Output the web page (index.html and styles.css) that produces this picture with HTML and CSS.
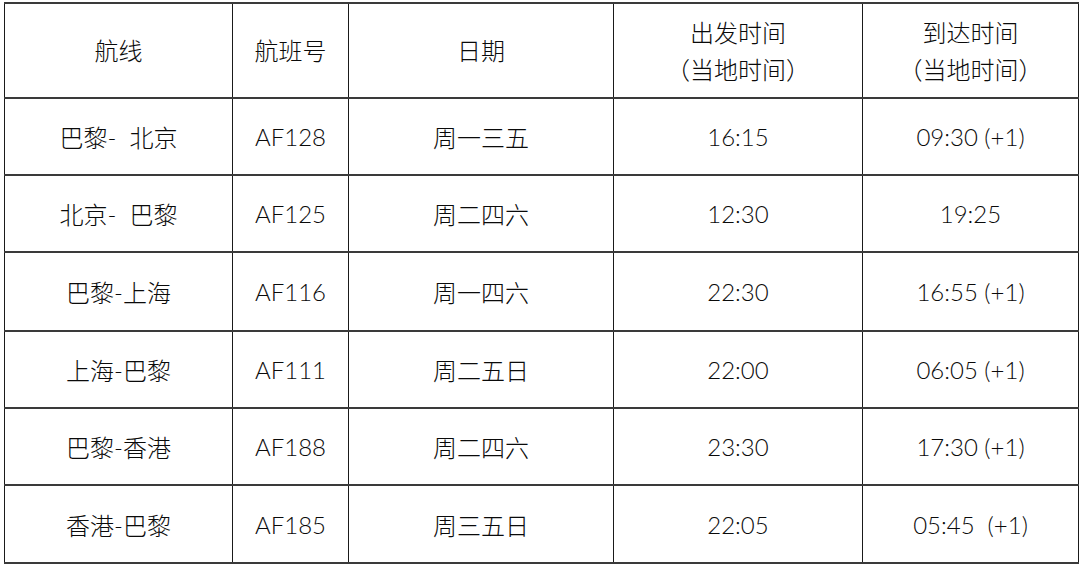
FILE: index.html
```html
<!DOCTYPE html>
<html lang="zh-CN">
<head>
<meta charset="utf-8">
<title>航班时刻表</title>
<link rel="stylesheet" href="styles.css">
</head>
<body>
<table class="schedule">
  <colgroup>
    <col class="c-route">
    <col class="c-flight">
    <col class="c-days">
    <col class="c-dep">
    <col class="c-arr">
  </colgroup>
  <thead>
    <tr class="head-row">
      <th>航线</th>
      <th>航班号</th>
      <th>日期</th>
      <th>出发时间<br>（当地时间）</th>
      <th>到达时间<br>（当地时间）</th>
    </tr>
  </thead>
  <tbody>
    <tr class="r1"><td>巴黎-&nbsp; 北京</td><td>AF128</td><td>周一三五</td><td>16:15</td><td>09:30 (+1)</td></tr>
    <tr class="r2"><td>北京-&nbsp; 巴黎</td><td>AF125</td><td>周二四六</td><td>12:30</td><td>19:25</td></tr>
    <tr class="r3"><td>巴黎-上海</td><td>AF116</td><td>周一四六</td><td>22:30</td><td>16:55 (+1)</td></tr>
    <tr class="r4"><td>上海-巴黎</td><td>AF111</td><td>周二五日</td><td>22:00</td><td>06:05 (+1)</td></tr>
    <tr class="r5"><td>巴黎-香港</td><td>AF188</td><td>周二四六</td><td>23:30</td><td>17:30 (+1)</td></tr>
    <tr class="r6"><td>香港-巴黎</td><td>AF185</td><td>周三五日</td><td>22:05</td><td>05:45&nbsp; (+1)</td></tr>
  </tbody>
</table>
</body>
</html>
```
FILE: styles.css
```css
html, body {
  margin: 0;
  padding: 0;
  background: #ffffff;
}

body {
  padding: 2px 0 0 4px;
}

.schedule {
  border-collapse: collapse;
  table-layout: fixed;
  width: 1074px;
  font-family: Lato, "Noto Sans CJK SC", sans-serif;
  font-size: 24px;
  color: #0a0a0a;
}

.c-route { width: 228px; }
.c-flight { width: 116px; }
.c-days { width: 265px; }
.c-dep { width: 249px; }
.c-arr { width: 216px; }

.schedule th,
.schedule td {
  border-left: 1px solid #1a1a1a;
  border-right: 1px solid #1a1a1a;
  border-top: 2px solid #3a3a3a;
  border-bottom: 2px solid #3a3a3a;
  text-align: center;
  vertical-align: middle;
  padding: 0;
  font-weight: 300;
}

.schedule th {
  line-height: 37px;
}

.head-row { height: 95px; }
.r1, .r2, .r4, .r5 { height: 77px; }
.r3 { height: 79px; }
.r6 { height: 78px; }
```
